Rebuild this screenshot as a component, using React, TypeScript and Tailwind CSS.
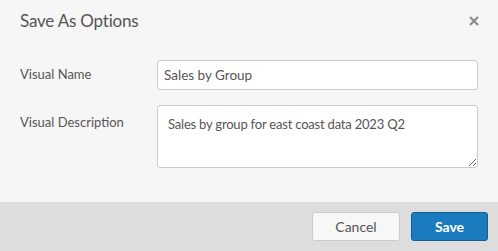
export default function App() {
  return (
    <div className="w-[498px] h-[251px] flex flex-col bg-[#f6f6f6] text-[#555]" style={{ fontFamily: 'Lato, "Liberation Sans", sans-serif' }}>
      <div className="h-[202px] px-5 flex flex-col">
        {/* Header */}
        <div className="flex items-center justify-between h-[40px] pt-[1px]">
          <h2 className="text-[17px] leading-none text-[#555] tracking-[-0.2px]">Save As Options</h2>
          <button className="w-[10px] h-[10px] mr-[-1px] flex items-center justify-center">
            <svg width="10" height="10" viewBox="0 0 10 10">
              <path d="M1 1L9 9M9 1L1 9" stroke="#888" strokeWidth="2" />
            </svg>
          </button>
        </div>

        {/* Form */}
        <div className="mt-[20px] flex items-center">
          <label className="w-[137px] text-[13px] text-[#555]">Visual Name</label>
          <input
            defaultValue="Sales by Group"
            className="flex-1 h-[30px] px-[6px] bg-white border border-[#ccc] rounded-[3px] text-[13.5px] text-[#555] outline-none"
          />
        </div>
        <div className="mt-[15px] flex items-start">
          <label className="w-[137px] pt-[8px] text-[13px] text-[#555]">Visual Description</label>
          <textarea
            defaultValue="Sales by group for east coast data 2023 Q2"
            className="flex-1 h-[63px] px-[10px] py-[9px] bg-white border border-[#ccc] rounded-[3px] text-[13px] tracking-[-0.2px] leading-[18px] text-[#555] outline-none resize-y"
          />
        </div>
      </div>

      {/* Footer */}
      <div className="flex-1 bg-[#dddddd] flex items-center justify-end gap-[11px] pr-[10px]">
        <button className="w-[88px] h-[29px] bg-[#f7f7f7] border border-[#ccc] rounded-[3px] text-[14px] text-[#555]">
          Cancel
        </button>
        <button className="w-[77px] h-[29px] bg-[#1a7bbf] border border-[#135d91] rounded-[3px] text-[14px] font-bold text-white">
          Save
        </button>
      </div>
    </div>
  );
}
